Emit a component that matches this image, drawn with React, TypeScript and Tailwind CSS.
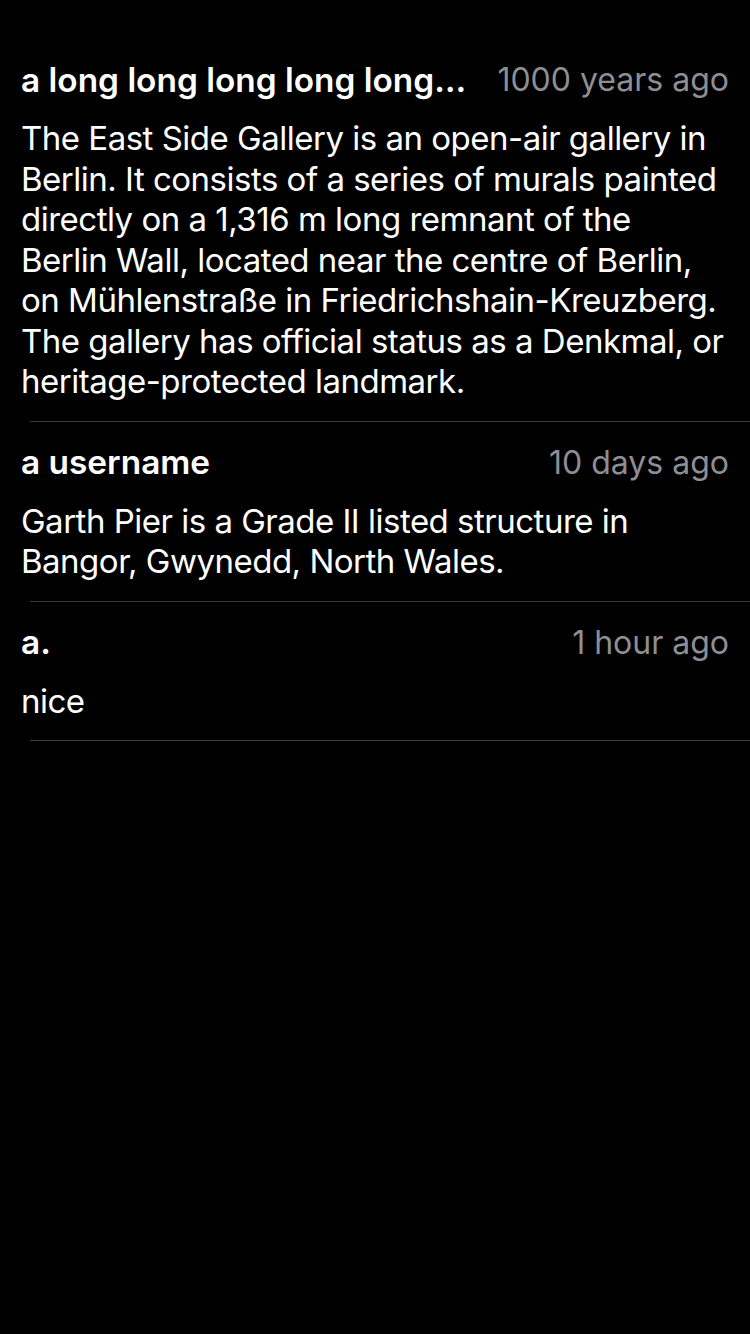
import React from "react";

const comments = [
  {
    user: "a long long long long long long long long username",
    time: "1000 years ago",
    body: "The East Side Gallery is an open-air gallery in Berlin. It consists of a series of murals painted directly on a 1,316 m long remnant of the Berlin Wall, located near the centre of Berlin, on Mühlenstraße in Friedrichshain-Kreuzberg. The gallery has official status as a Denkmal, or heritage-protected landmark.",
  },
  {
    user: "a username",
    time: "10 days ago",
    body: "Garth Pier is a Grade II listed structure in Bangor, Gwynedd, North Wales.",
  },
  { user: "a.", time: "1 hour ago", body: "nice" },
];

export default function App() {
  return (
    <div
      className="min-h-[1334px] w-[750px] bg-black pt-[39px]"
      style={{ fontFamily: "Inter, 'Noto Sans', sans-serif" }}
    >
      {comments.map((c, i) => (
        <div key={i} className="flex flex-col">
          <div className="pl-[21px] pr-[21px] pt-[23px] pb-[19px]">
            <div className="flex items-center h-[36px]">
              <div className="flex-1 min-w-0 truncate text-[33.4px] font-semibold text-white pr-[30px]">
                {c.user}
              </div>
              <div className="shrink-0 text-[32px] text-[#8e8e93]">
                {c.time}
              </div>
            </div>
            <p className="mt-[20px] max-w-[702.5px] text-[33px] leading-[40.5px] text-white tracking-[-0.5px]">
              {c.body}
            </p>
          </div>
          <div className="ml-[30px] h-px bg-[#3a3a3c]" />
        </div>
      ))}
    </div>
  );
}
